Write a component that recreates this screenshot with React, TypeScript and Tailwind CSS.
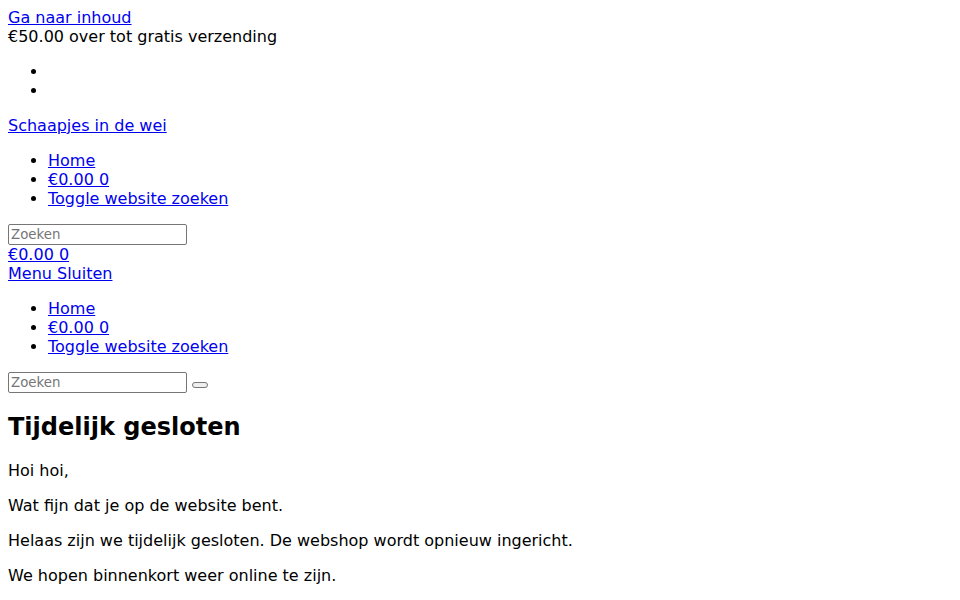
export default function App() {
  const link = 'text-[#0000ee] underline'
  const list = 'list-disc pl-10 my-4'

  const SearchForm = ({ withButton }: { withButton?: boolean }) => (
    <form onSubmit={(e) => e.preventDefault()}>
      <input
        type="search"
        placeholder="Zoeken"
        className="w-[179px] h-[21px] border border-[#767676] rounded-[2px] px-[2px] py-[1px] text-[13.33px] leading-[normal] bg-white placeholder:text-[#757575] align-baseline"
      />{' '}
      {withButton && (
        <button
          type="submit"
          className="inline-block w-[16px] h-[6px] border border-[#767676] rounded-[3px] bg-[#efefef] align-baseline"
        ></button>
      )}
    </form>
  )

  const NavList = () => (
    <ul className={list}>
      <li>
        <a href="#" className={link}>Home</a>
      </li>
      <li>
        <a href="#" className={link}>€0.00 0</a>
      </li>
      <li>
        <a href="#" className={link}>Toggle website zoeken</a>
      </li>
    </ul>
  )

  return (
    <div className="min-h-screen bg-white text-black text-base leading-[normal] font-['DejaVu_Sans',sans-serif] m-0">
      <div className="p-2">
        <a href="#" className={link}>Ga naar inhoud</a>
        <div>€50.00 over tot gratis verzending</div>

        <ul className={list}>
          <li></li>
          <li></li>
        </ul>

        <a href="#" className={link}>Schaapjes in de wei</a>

        {/* Hoofdnavigatie */}
        <NavList />
        <SearchForm />

        <div>
          <a href="#" className={link}>€0.00 0</a>
        </div>
        <div>
          <a href="#" className={link}>Menu Sluiten</a>
        </div>

        {/* Mobiele navigatie */}
        <NavList />
        <SearchForm withButton />

        <main>
          <h1 className="text-2xl leading-[normal] font-bold my-[19.92px]">Tijdelijk gesloten</h1>
          <p className="my-4">Hoi hoi,</p>
          <p className="my-4">Wat fijn dat je op de website bent.</p>
          <p className="my-4">Helaas zijn we tijdelijk gesloten. De webshop wordt opnieuw ingericht.</p>
          <p className="my-4">We hopen binnenkort weer online te zijn.</p>
        </main>
      </div>
    </div>
  )
}
